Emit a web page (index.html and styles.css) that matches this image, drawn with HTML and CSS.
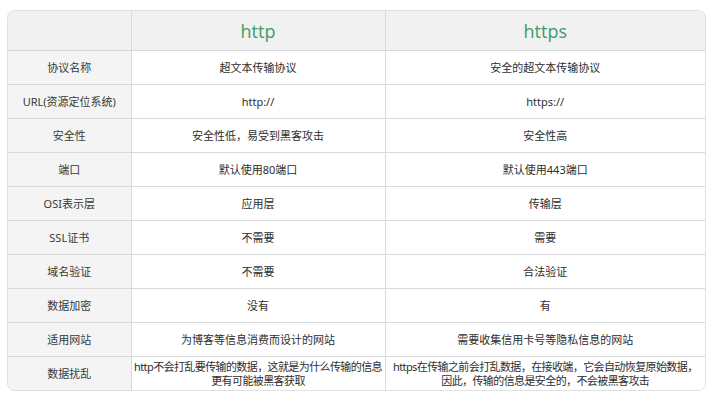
FILE: index.html
```html
<!DOCTYPE html>
<html lang="zh-CN">
<head>
<meta charset="utf-8">
<link rel="stylesheet" href="styles.css">
</head>
<body>
<div class="card">
  <table class="cmp">
    <colgroup>
      <col class="c-label">
      <col class="c-http">
      <col class="c-https">
    </colgroup>
    <thead>
      <tr class="head">
        <th class="corner"></th>
        <th class="proto">http</th>
        <th class="proto">https</th>
      </tr>
    </thead>
    <tbody>
      <tr><th>协议名称</th><td>超文本传输协议</td><td>安全的超文本传输协议</td></tr>
      <tr><th>URL(资源定位系统)</th><td>http://</td><td>https://</td></tr>
      <tr><th>安全性</th><td>安全性低，易受到黑客攻击</td><td>安全性高</td></tr>
      <tr><th>端口</th><td>默认使用80端口</td><td>默认使用443端口</td></tr>
      <tr><th>OSI表示层</th><td>应用层</td><td>传输层</td></tr>
      <tr><th>SSL证书</th><td>不需要</td><td>需要</td></tr>
      <tr><th>域名验证</th><td>不需要</td><td>合法验证</td></tr>
      <tr><th>数据加密</th><td>没有</td><td>有</td></tr>
      <tr><th>适用网站</th><td>为博客等信息消费而设计的网站</td><td>需要收集信用卡号等隐私信息的网站</td></tr>
      <tr class="last"><th>数据扰乱</th><td class="tight">http不会打乱要传输的数据，这就是为什么传输的信息<br>更有可能被黑客获取</td><td class="tight">https在传输之前会打乱数据，在接收端，它会自动恢复原始数据，<br>因此，传输的信息是安全的，不会被黑客攻击</td></tr>
    </tbody>
  </table>
</div>
</body>
</html>
```

FILE: styles.css
```css
html, body {
  margin: 0;
  padding: 0;
  background: #ffffff;
}

body {
  padding: 10px 13px 0 7px;
  font-family: "Noto Sans", "Noto Sans CJK SC", sans-serif;
}

.card {
  width: 697px;
  border: 1px solid #e0e0e0;
  border-radius: 8px;
  overflow: hidden;
  background: #f3f3f3;
  box-shadow: 0 0 2px rgba(0, 0, 0, 0.04);
}

.cmp {
  width: 100%;
  border-collapse: collapse;
  table-layout: fixed;
}

.c-label { width: 123px; }
.c-http { width: 254px; }

.cmp th,
.cmp td {
  padding: 0;
  text-align: center;
  vertical-align: middle;
  font-size: 11px;
  font-weight: normal;
  color: #2e2e2e;
  border: 1px solid #dadada;
  height: 33px;
  line-height: 14px;
  white-space: nowrap;
}

.cmp tr > :first-child { border-left: none; }
.cmp tr > :last-child { border-right: none; }
.cmp tr.last > * { border-bottom: none; }
.cmp tr.head > * { border-top: none; }

.cmp tbody th {
  background: #f4f4f4;
  color: #383838;
}

.cmp tbody td {
  background: #ffffff;
}

.cmp tr.head > th {
  height: 39px;
  background: #f1f1f1;
  border-bottom-color: #d6d6d6;
}

.cmp .proto {
  font-size: 18px;
  color: #3c9d6a;
  font-family: "Open Sans", "Noto Sans", sans-serif;
}

.cmp td.tight {
  letter-spacing: -0.6px;
  overflow: visible;
}
```
